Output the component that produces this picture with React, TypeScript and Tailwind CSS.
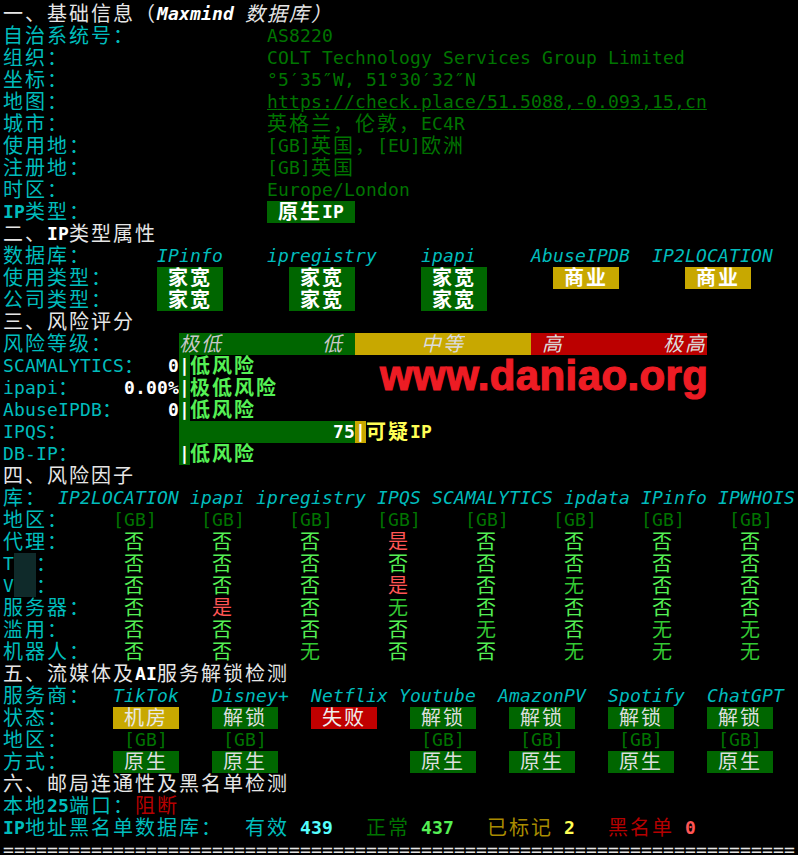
import React from 'react';

// terminal cell grid: 11px per narrow cell, 22px per wide (CJK) cell, 22px rows
const S: Record<string, string> = {
  w: 'text-[#e6e6e6]',
  wi: 'text-[#e6e6e6] italic',
  wb: 'text-white font-bold',
  wbi: 'text-white font-bold italic',
  c: 'text-[#00bcbc]',
  cb: 'text-[#00bcbc] font-bold',
  ci: 'text-[#00bcbc] italic',
  g: 'text-[#007400]',
  gu: 'text-[#007400] underline',
  G: 'text-[#55f055]',
  Gb: 'text-[#55f055] font-bold',
  n: 'text-[#33c833]',
  R: 'text-[#ff5555]',
  Rb: 'text-[#ff5555] font-bold',
  Cb: 'text-[#55ffff] font-bold',
  Yb: 'text-[#ffff55] font-bold',
  y: 'text-[#a88c00]',
  r: 'text-[#b40000]',
  boxG: 'bg-[#006600] text-white font-bold',
  boxY: 'bg-[#c8a800] text-white font-bold',
  bxG: 'bg-[#006600] text-[#dedede]',
  bxY: 'bg-[#c8a800] text-[#e8e8e8]',
  bxR: 'bg-[#c00000] text-[#eeeeee]',
  barG: 'bg-[#006600] text-[#c8c8c8] italic',
  barY: 'bg-[#c8a800] text-[#dcdcdc] italic',
  barR: 'bg-[#bb0000] text-[#dcdcdc] italic',
  pipeG: 'bg-[#006600] text-white font-bold',
  pipeY: 'bg-[#c8a800] text-white font-bold',
  hide: 'bg-[#0f2a2a]',
};

type Seg = [number, string, string];

const isWide = (ch: string) => (ch.codePointAt(0) ?? 0) >= 0x2e80;
const width = (t: string) => Array.from(t).reduce((n, ch) => n + (isWide(ch) ? 2 : 1), 0);

const cols8 = (start: number, step: number, vals: [string, string][]): Seg[] =>
  vals.map(([t, s], i) => [start + i * step, t, s] as Seg);

const factor = (label: string, vals: string) =>
  [
    [0, label, 'c'] as Seg,
    ...cols8(
      11,
      8,
      Array.from(vals).map((v) => [v, v === '否' ? 'G' : v === '是' ? 'R' : 'n'] as [string, string])
    ),
  ];

const rows: Seg[][] = [
  [[0, '一、基础信息（', 'w'], [14, 'Maxmind', 'wbi'], [21, ' 数据库）', 'wi']],
  [[0, '自治系统号：', 'c'], [24, 'AS8220', 'g']],
  [[0, '组织：', 'c'], [24, 'COLT Technology Services Group Limited', 'g']],
  [[0, '坐标：', 'c'], [24, '°5′35″W, 51°30′32″N', 'g']],
  [[0, '地图：', 'c'], [24, 'https://check.place/51.5088,-0.093,15,cn', 'gu']],
  [[0, '城市：', 'c'], [24, '英格兰，伦敦，EC4R', 'g']],
  [[0, '使用地：', 'c'], [24, '[GB]英国，[EU]欧洲', 'g']],
  [[0, '注册地：', 'c'], [24, '[GB]英国', 'g']],
  [[0, '时区：', 'c'], [24, 'Europe/London', 'g']],
  [[0, 'IP', 'cb'], [2, '类型：', 'c'], [24, ' 原生IP ', 'boxG']],
  [[0, '二、', 'w'], [4, 'IP', 'wb'], [6, '类型属性', 'w']],
  [
    [0, '数据库：', 'c'],
    [14, 'IPinfo', 'ci'],
    [24, 'ipregistry', 'ci'],
    [38, 'ipapi', 'ci'],
    [48, 'AbuseIPDB', 'ci'],
    [59, 'IP2LOCATION', 'ci'],
  ],
  [
    [0, '使用类型：', 'c'],
    [14, ' 家宽 ', 'boxG'],
    [26, ' 家宽 ', 'boxG'],
    [38, ' 家宽 ', 'boxG'],
    [50, ' 商业 ', 'boxY'],
    [62, ' 商业 ', 'boxY'],
  ],
  [[0, '公司类型：', 'c'], [14, ' 家宽 ', 'boxG'], [26, ' 家宽 ', 'boxG'], [38, ' 家宽 ', 'boxG']],
  [[0, '三、风险评分', 'w']],
  [
    [0, '风险等级：', 'c'],
    [16, '极低         低 ', 'barG'],
    [32, '      中等      ', 'barY'],
    [48, ' 高         极高', 'barR'],
  ],
  [[0, 'SCAMALYTICS：', 'c'], [15, '0', 'wb'], [16, '|', 'pipeG'], [17, '低风险', 'Gb']],
  [[0, 'ipapi：', 'c'], [11, '0.00%', 'wb'], [16, '|', 'pipeG'], [17, '极低风险', 'Gb']],
  [[0, 'AbuseIPDB：', 'c'], [15, '0', 'wb'], [16, '|', 'pipeG'], [17, '低风险', 'Gb']],
  [[0, 'IPQS：', 'c'], [16, '              75', 'pipeG'], [32, '|', 'pipeY'], [33, '可疑IP', 'Yb']],
  [[0, 'DB-IP：', 'c'], [16, '|', 'pipeG'], [17, '低风险', 'Gb']],
  [[0, '四、风险因子', 'w']],
  [[0, '库：', 'c'], [5, 'IP2LOCATION ipapi ipregistry IPQS SCAMALYTICS ipdata IPinfo IPWHOIS', 'ci']],
  [[0, '地区：', 'c'], ...cols8(10, 8, Array(8).fill(['[GB]', 'g']))],
  factor('代理：', '否否否是否否否否'),
  [[0, 'T', 'c'], [1, '  ', 'hide'], [3, '：', 'c'], ...factor('', '否否否否否否否否').slice(1)],
  [[0, 'V', 'c'], [1, '  ', 'hide'], [3, '：', 'c'], ...factor('', '否否否是否无否否').slice(1)],
  factor('服务器：', '否是否无否否否否'),
  factor('滥用：', '否否否否无否无无'),
  factor('机器人：', '否否无否否无无无'),
  [[0, '五、流媒体及', 'w'], [12, 'AI', 'wb'], [14, '服务解锁检测', 'w']],
  [
    [0, '服务商：', 'c'],
    [10, 'TikTok', 'ci'],
    [19, 'Disney+', 'ci'],
    [28, 'Netflix', 'ci'],
    [36, 'Youtube', 'ci'],
    [45, 'AmazonPV', 'ci'],
    [55, 'Spotify', 'ci'],
    [64, 'ChatGPT', 'ci'],
  ],
  [
    [0, '状态：', 'c'],
    [10, ' 机房 ', 'bxY'],
    [19, ' 解锁 ', 'bxG'],
    [28, ' 失败 ', 'bxR'],
    [37, ' 解锁 ', 'bxG'],
    [46, ' 解锁 ', 'bxG'],
    [55, ' 解锁 ', 'bxG'],
    [64, ' 解锁 ', 'bxG'],
  ],
  [
    [0, '地区：', 'c'],
    [11, '[GB]', 'g'],
    [20, '[GB]', 'g'],
    [38, '[GB]', 'g'],
    [47, '[GB]', 'g'],
    [56, '[GB]', 'g'],
    [65, '[GB]', 'g'],
  ],
  [
    [0, '方式：', 'c'],
    [10, ' 原生 ', 'bxG'],
    [19, ' 原生 ', 'bxG'],
    [37, ' 原生 ', 'bxG'],
    [46, ' 原生 ', 'bxG'],
    [55, ' 原生 ', 'bxG'],
    [64, ' 原生 ', 'bxG'],
  ],
  [[0, '六、邮局连通性及黑名单检测', 'w']],
  [[0, '本地', 'c'], [4, '25', 'cb'], [6, '端口：', 'c'], [12, '阻断', 'r']],
  [
    [0, 'IP', 'cb'],
    [2, '地址黑名单数据库：', 'c'],
    [22, '有效', 'c'],
    [27, '439', 'Cb'],
    [33, '正常', 'g'],
    [38, '437', 'Gb'],
    [44, '已标记', 'y'],
    [51, '2', 'Yb'],
    [55, '黑名单', 'r'],
    [62, '0', 'Rb'],
  ],
  [[0, '='.repeat(72), 'w']],
];

function Row({ segs }: { segs: Seg[] }) {
  const out: React.ReactNode[] = [];
  let col = 0;
  segs.forEach(([at, text, style], si) => {
    if (at > col) {
      out.push(<span key={`g${si}`} className="shrink-0" style={{ width: (at - col) * 11 }} />);
      col = at;
    }
    Array.from(text).forEach((ch, i) => {
      const wide = isWide(ch);
      out.push(
        <span
          key={`${si}-${i}`}
          className={`${wide ? 'w-[22px] text-[20px]' : 'w-[11px]'} shrink-0 overflow-visible ${S[style]}`}
        >
          {ch === ' ' ? '\u00a0' : ch}
        </span>
      );
    });
    col += width(text);
  });
  return <div className="flex h-[22px] leading-[22px] whitespace-pre">{out}</div>;
}

export default function App() {
  return (
    <div className="relative h-[855px] w-[798px] overflow-hidden bg-black pl-[3px] pt-[3px] font-['DejaVu_Sans_Mono','Noto_Sans_CJK_SC',monospace] text-[18px]">
      {rows.map((segs, i) => (
        <Row key={i} segs={segs} />
      ))}

      {/* watermark */}
      <div className="absolute left-[380px] top-[355px] font-['Liberation_Sans',Arial,sans-serif] text-[42px] font-bold leading-[42px] tracking-[0.4px] text-[#ed1c24] [-webkit-text-stroke:1.2px_#ed1c24]">
        www.daniao.org
      </div>
    </div>
  );
}
